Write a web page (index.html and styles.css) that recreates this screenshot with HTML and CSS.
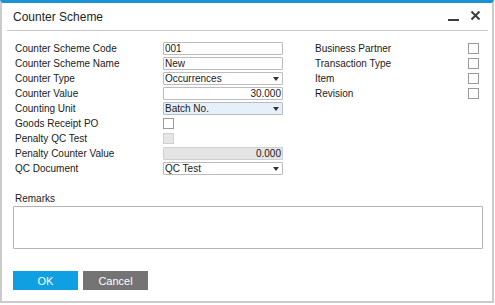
FILE: index.html
```html
<!DOCTYPE html>
<html lang="en">
<head>
    <meta charset="UTF-8">
    <meta name="viewport" content="width=device-width, initial-scale=1.0">
    <title>Counter Scheme</title>
    <link rel="stylesheet" href="styles.css">
</head>
<body>
    <div class="dialog">
        <!-- Title bar -->
        <div class="title-bar">
            <span class="title">Counter Scheme</span>
            <svg class="window-buttons" width="33" height="11" viewBox="0 0 33 11">
                <rect x="0" y="8" width="11" height="2" fill="#3c3c3c"/>
                <path d="M23.5 0.5 L31.5 8.5 M31.5 0.5 L23.5 8.5" stroke="#3c3c3c" stroke-width="2"/>
            </svg>
        </div>

        <div class="content">
            <div class="form-grid">
                <label class="label">Counter Scheme Code</label>
                <div class="field">001</div>
                <label class="label right">Business Partner</label>
                <span class="check right-box"></span>

                <label class="label">Counter Scheme Name</label>
                <div class="field">New</div>
                <label class="label right">Transaction Type</label>
                <span class="check right-box"></span>

                <label class="label">Counter Type</label>
                <div class="field select"><span>Occurrences</span><i class="arrow"></i></div>
                <label class="label right">Item</label>
                <span class="check right-box"></span>

                <label class="label">Counter Value</label>
                <div class="field number">30.000</div>
                <label class="label right">Revision</label>
                <span class="check right-box"></span>

                <label class="label">Counting Unit</label>
                <div class="field select focused"><span>Batch No.</span><i class="arrow"></i></div>

                <label class="label">Goods Receipt PO</label>
                <div class="check-cell"><span class="check"></span></div>

                <label class="label">Penalty QC Test</label>
                <div class="check-cell"><span class="check disabled"></span></div>

                <label class="label">Penalty Counter Value</label>
                <div class="field number disabled">0.000</div>

                <label class="label">QC Document</label>
                <div class="field select"><span>QC Test</span><i class="arrow"></i></div>
            </div>

            <div class="remarks">
                <label class="label">Remarks</label>
                <div class="remarks-box"></div>
            </div>

            <div class="buttons">
                <button class="btn btn-ok">OK</button>
                <button class="btn btn-cancel">Cancel</button>
            </div>
        </div>
    </div>
</body>
</html>
```

FILE: styles.css
```css
body {
    margin: 0;
    background-color: #ffffff;
    font-family: 'Liberation Sans', Arial, sans-serif;
    color: #1a1a1a;
}
.dialog {
    box-sizing: border-box;
    width: 494px;
    height: 303px;
    border: 2px solid #cbcbcb;
    border-top: 3px solid #1a93d6;
    display: flex;
    flex-direction: column;
}

/* Title bar */
.title-bar {
    height: 27px;
    margin: 0 4px 0 5px;
    padding: 0 7px 0 6px;
    border-bottom: 1px solid #c8c8c8;
    display: flex;
    align-items: center;
    justify-content: space-between;
}
.title {
    font-size: 12px;
    color: #1e1e1e;
}

.content {
    padding: 10px 9px 0 11px;
}

/* Form fields */
.form-grid {
    display: grid;
    grid-template-columns: 148px 120px 32px 153px 11px;
    grid-auto-rows: 15px;
    align-items: center;
    padding-left: 2px;
}
.label {
    grid-column: 1;
    font-size: 10px;
    line-height: 12px;
    white-space: nowrap;
}
.label.right {
    grid-column: 4;
}
.right-box {
    grid-column: 5;
}
.field {
    grid-column: 2;
    box-sizing: border-box;
    height: 13px;
    border: 1px solid #bcbcbc;
    border-radius: 1px;
    background-color: #ffffff;
    font-size: 10px;
    line-height: 11px;
    padding: 0 2px 0 1px;
    white-space: nowrap;
}
.field.number {
    text-align: right;
    padding-right: 1px;
}
.field.disabled {
    background-color: #e4e4e4;
    border-color: #d0d0d0;
}
.field.select {
    display: flex;
    align-items: center;
    justify-content: space-between;
}
.field.focused {
    background-color: #e5f0fb;
}
.arrow {
    width: 0;
    height: 0;
    border-left: 3px solid transparent;
    border-right: 3px solid transparent;
    border-top: 4px solid #333333;
    margin-right: 1px;
}
.check-cell {
    grid-column: 2;
    display: flex;
}
.check {
    box-sizing: border-box;
    width: 11px;
    height: 11px;
    border: 1px solid #9a9a9a;
    background-color: #ffffff;
}
.check.disabled {
    background-color: #e6e6e6;
    border-color: #cfcfcf;
}

/* Remarks */
.remarks {
    margin-top: 17px;
}
.remarks .label {
    display: block;
    padding-left: 2px;
}
.remarks-box {
    box-sizing: border-box;
    margin-top: 1px;
    width: 470px;
    height: 43px;
    border: 1px solid #b4b4b4;
    border-radius: 1px;
}

/* Buttons */
.buttons {
    margin-top: 22px;
    display: flex;
    gap: 5px;
}
.btn {
    width: 65px;
    height: 19px;
    border: none;
    padding: 0;
    color: #ffffff;
    font-family: 'Liberation Sans', Arial, sans-serif;
    font-size: 11px;
    cursor: pointer;
}
.btn-ok {
    background-color: #109fe1;
}
.btn-cancel {
    background-color: #747474;
}
```
